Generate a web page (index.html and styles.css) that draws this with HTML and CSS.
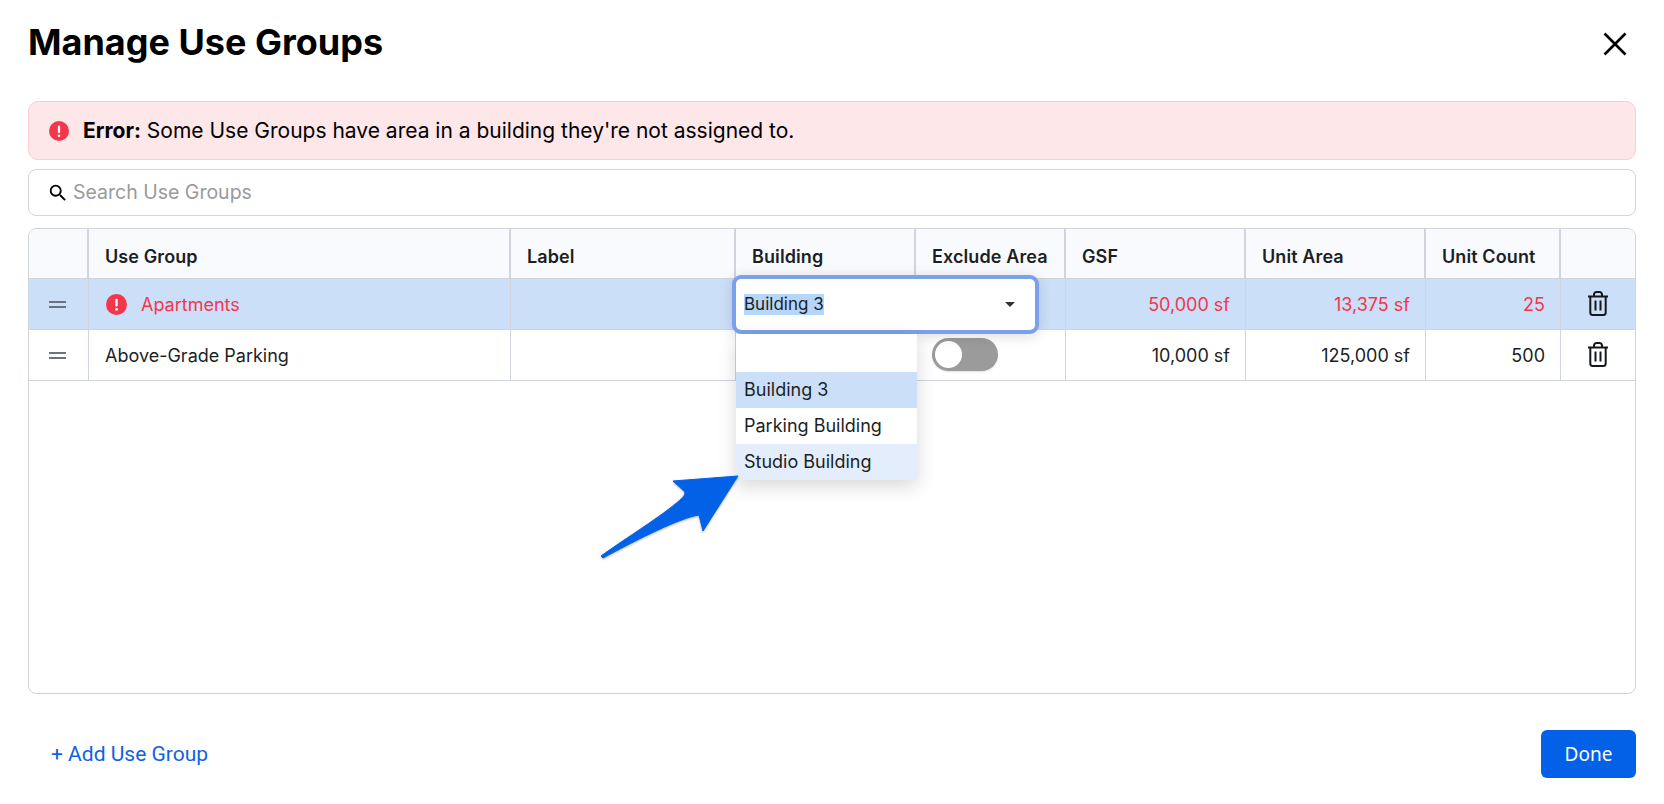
FILE: index.html
```html
<!DOCTYPE html>
<html lang="en">
<head>
<meta charset="utf-8">
<title>Manage Use Groups</title>
<link rel="stylesheet" href="styles.css">
</head>
<body>
<main class="modal">
  <header class="modal-head">
    <h1 class="title">Manage Use Groups</h1>
    <button class="close" aria-label="Close">
      <svg class="close-icon" viewBox="0 0 24 24"><path d="M1.500 1.500 22.500 22.500M22.500 1.500 1.500 22.500"/></svg>
    </button>
  </header>

  <div class="alert">
    <svg class="err-icon" viewBox="0 0 20 20"><circle cx="10" cy="10" r="10"/><rect class="err-mark" x="8.900" y="4.500" width="2.200" height="7.500" rx="1"/><circle class="err-mark" cx="10" cy="14.700" r="1.300"/></svg>
    <p class="alert-text"><strong>Error:</strong> Some Use Groups have area in a building they're not assigned to.</p>
  </div>

  <div class="search">
    <svg class="search-icon" viewBox="0 0 24 24"><path d="M15.500 14h-.79l-.28-.27A6.470 6.470 0 0 0 16 9.500 6.500 6.500 0 1 0 9.500 16c1.610 0 3.090-.59 4.230-1.570l.27.28v.79l5 4.990L20.490 19l-4.990-5zm-6 0C7.010 14 5 11.990 5 9.500S7.010 5 9.500 5 14 7.010 14 9.500 11.990 14 9.500 14z"/></svg>
    <span class="search-ph">Search Use Groups</span>
  </div>

  <section class="table">
    <div class="row head">
      <div class="cell"></div>
      <div class="cell">Use Group</div>
      <div class="cell">Label</div>
      <div class="cell">Building</div>
      <div class="cell">Exclude Area</div>
      <div class="cell">GSF</div>
      <div class="cell">Unit Area</div>
      <div class="cell">Unit Count</div>
      <div class="cell"></div>
    </div>
    <div class="row selected">
      <div class="cell center"><span class="grip"></span></div>
      <div class="cell error"><svg class="err-icon" viewBox="0 0 20 20"><circle cx="10" cy="10" r="10"/><rect class="err-mark" x="8.900" y="4.500" width="2.200" height="7.500" rx="1"/><circle class="err-mark" cx="10" cy="14.700" r="1.300"/></svg>Apartments</div>
      <div class="cell"></div>
      <div class="cell"></div>
      <div class="cell"></div>
      <div class="cell num error">50,000 sf</div>
      <div class="cell num error">13,375 sf</div>
      <div class="cell num error">25</div>
      <div class="cell center"><svg class="trash" viewBox="0 0 22 25"><path d="M1 5.500h20M7 5V3.500A2.500 2.500 0 0 1 9.500 1h3A2.500 2.500 0 0 1 15 3.500V5M3.300 5.500V21.500a2.500 2.500 0 0 0 2.500 2.500h10.400a2.500 2.500 0 0 0 2.500-2.500V5.500M8.500 9.500v10M13.500 9.500v10"/></svg></div>
    </div>
    <div class="row">
      <div class="cell center"><span class="grip"></span></div>
      <div class="cell">Above-Grade Parking</div>
      <div class="cell"></div>
      <div class="cell"></div>
      <div class="cell"><span class="toggle"><span class="knob"></span></span></div>
      <div class="cell num">10,000 sf</div>
      <div class="cell num">125,000 sf</div>
      <div class="cell num">500</div>
      <div class="cell center"><svg class="trash" viewBox="0 0 22 25"><path d="M1 5.500h20M7 5V3.500A2.500 2.500 0 0 1 9.500 1h3A2.500 2.500 0 0 1 15 3.500V5M3.300 5.500V21.500a2.500 2.500 0 0 0 2.500 2.500h10.400a2.500 2.500 0 0 0 2.500-2.500V5.500M8.500 9.500v10M13.500 9.500v10"/></svg></div>
    </div>
  </section>

  <footer class="modal-foot">
    <a class="add" href="#">+ Add Use Group</a>
    <button class="done">Done</button>
  </footer>
</main>

<div class="select">
  <span class="select-value">Building 3</span>
  <span class="caret"></span>
</div>
<ul class="menu">
  <li class="opt"></li>
  <li class="opt opt-current">Building 3</li>
  <li class="opt">Parking Building</li>
  <li class="opt opt-hover">Studio Building</li>
</ul>

<svg class="arrow" viewBox="0 0 150 90"><path d="M21 86 C46 68 82 46 100 30 C104 26 105 25 105 22 L93 11 L158 6 L123 61 L119 45 C100 48 60 68 23 88 Z"/></svg>
</body>
</html>
```
FILE: styles.css
```css
* { box-sizing: border-box; }
html, body { margin: 0; padding: 0; }
body {
  width: 1664px;
  height: 804px;
  overflow: hidden;
  background: #fff;
  font-family: Inter, "Liberation Sans", sans-serif;
  font-size: 18px;
  color: #1b1f24;
  position: relative;
}
.modal { padding: 0 28px 0 28px; }
.modal-head {
  height: 101px;
  display: flex;
  justify-content: space-between;
  align-items: flex-start;
}
.title {
  margin: 18px 0 0;
  font-size: 36px;
  line-height: 48px;
  font-weight: 700;
  color: #000;
}
.close {
  margin: 32px 9px 0 0;
  padding: 0;
  width: 24px;
  height: 24px;
  border: 0;
  background: none;
}
.close-icon { display: block; width: 24px; height: 24px; fill: none; stroke: #000; stroke-width: 2.600; }

.alert {
  height: 59px;
  display: flex;
  align-items: center;
  gap: 14px;
  padding-left: 20px;
  background: #fde7e9;
  border: 1px solid #fbcdd3;
  border-radius: 10px;
  font-size: 21px;
  color: #000;
}
.alert-text { margin: 0; }
.err-icon { width: 20px; height: 20px; fill: #f4364c; flex: none; }
.err-mark { fill: #fff; }

.search {
  height: 47px;
  margin-top: 9px;
  display: flex;
  align-items: center;
  gap: 4px;
  padding: 0 0 2px 18px;
  border: 1px solid #d0d4dc;
  border-radius: 8px;
  font-size: 19.500px;
  color: #9a9a9a;
}
.search-icon { width: 22px; height: 22px; fill: #000; flex: none; margin-top: 2px; }

.table {
  height: 466px;
  margin-top: 12px;
  border: 1px solid #d0d4dc;
  border-radius: 8px;
  overflow: hidden;
}
.row {
  display: grid;
  grid-template-columns: 60px 422px 225px 180px 150px 180px 180px 135px 74px;
  height: 51px;
  border-bottom: 1px solid #d0d4dc;
}
.cell {
  display: flex;
  align-items: center;
  min-width: 0;
  padding: 0 16px;
  border-right: 1px solid #d0d4dc;
}
.cell:last-child { border-right: 0; }
.center { justify-content: center; padding: 0; }
.num { justify-content: flex-end; }
.head { height: 50px; background: #f9fafe; font-weight: 600; letter-spacing: .1px; }
.head .cell { border-right-width: 2px; padding-top: 6px; }
.head .cell:last-child { border-right: 0; }
.selected { background: #cbdff9; }
.row:not(.head) .cell { padding-top: 1px; }
.row:not(.head) .center { padding: 0; }
.row:not(.head) .num { padding-right: 15px; }
.error { color: #f4364c; }
.error .err-icon { width: 21px; height: 21px; margin: 0 14px 0 1px; }
.grip {
  display: block;
  width: 17px;
  height: 7px;
  margin-right: 3px;
  border-top: 2px solid #6b7280;
  border-bottom: 2px solid #6b7280;
}
.trash { width: 22px; height: 25px; fill: none; stroke: #14181d; stroke-width: 2; margin-bottom: 1px; }

.toggle {
  display: block;
  width: 66px;
  height: 33px;
  margin-bottom: 3px;
  padding: 3px;
  border-radius: 17px;
  background: #9b9b9b;
  box-shadow: 0 1px 2px rgba(0, 0, 0, .12);
}
.knob { display: block; width: 27px; height: 27px; border-radius: 50%; background: #fff; }

.modal-foot {
  margin-top: 36px;
  display: flex;
  justify-content: space-between;
  align-items: center;
}
.add {
  margin-left: 23px;
  font-family: Roboto, sans-serif;
  font-size: 21px;
  color: #0f62e6;
  text-decoration: none;
}
.done {
  width: 95px;
  height: 48px;
  border: 0;
  border-radius: 6px;
  background: #0361e8;
  color: #fff;
  font-family: "Noto Sans", sans-serif;
  font-size: 19px;
}

.select {
  position: absolute;
  left: 732px;
  top: 275px;
  width: 307px;
  height: 59px;
  display: flex;
  align-items: center;
  justify-content: space-between;
  padding: 0 20px 0 9px;
  background: #fff;
  border: 4px solid #7ba1ec;
  border-radius: 9px;
  box-shadow: 0 2px 14px rgba(0, 0, 0, .14);
  font-size: 17px;
}
.select-value { background: #b5d5fb; line-height: 21px; margin-left: -1px; }
.caret {
  width: 0;
  height: 0;
  border-left: 5.500px solid transparent;
  border-right: 5.500px solid transparent;
  border-top: 5.500px solid #30343a;
}
.menu {
  position: absolute;
  left: 736px;
  top: 334px;
  width: 181px;
  margin: 0;
  padding: 0;
  list-style: none;
  background: #fff;
  box-shadow: 0 6px 18px rgba(0, 0, 0, .16);
}
.opt {
  height: 36px;
  padding-left: 8px;
  line-height: 36px;
}
.opt:first-child { height: 38px; }
.opt-current { background: #cbdff9; }
.opt-hover { background: #e3edfc; }

.arrow {
  position: absolute;
  left: 580px;
  top: 470px;
  width: 150px;
  height: 90px;
  overflow: visible;
  fill: #0361e8;
  stroke: #0361e8;
  stroke-width: 1;
  stroke-linejoin: round;
  filter: drop-shadow(0 1px 1px rgba(0, 0, 0, .3));
}
```
